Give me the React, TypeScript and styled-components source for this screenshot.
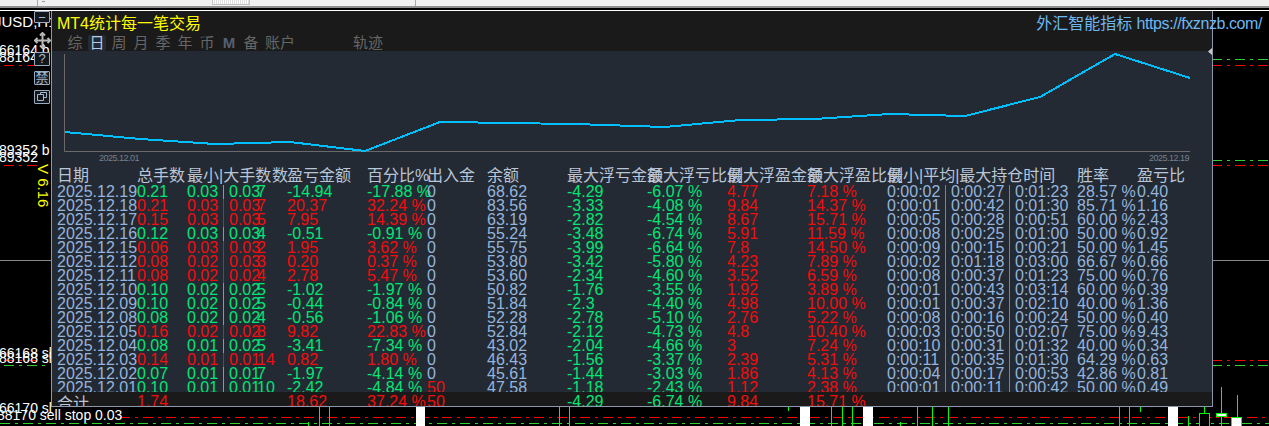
import { createGlobalStyle } from "styled-components";
import styled from "styled-components";

const GlobalStyle = createGlobalStyle`
  html, body {
    margin: 0;
    padding: 0;
    background: #000;
    overflow: hidden;
  }
`;

const columns = "80px 50px 36px 34px 30px 80px 60px 60px 80px 80px 80px 80px 80px 58px 6px 58px 6px 62px 60px 60px";

type Row = string[];

const rows: Row[] = [
  ["2025.12.19", "0.21", "0.03", "0.03", "7", "-14.94", "-17.88 %", "0", "68.62", "-4.29", "-6.07 %", "4.77", "7.18 %", "0:00:02", "0:00:27", "0:01:23", "28.57 %", "0.40"],
  ["2025.12.18", "0.21", "0.03", "0.03", "7", "20.37", "32.24 %", "0", "83.56", "-3.33", "-4.08 %", "9.84", "14.37 %", "0:00:01", "0:00:42", "0:01:30", "85.71 %", "1.16"],
  ["2025.12.17", "0.15", "0.03", "0.03", "5", "7.95", "14.39 %", "0", "63.19", "-2.82", "-4.54 %", "8.67", "15.71 %", "0:00:05", "0:00:28", "0:00:51", "60.00 %", "2.43"],
  ["2025.12.16", "0.12", "0.03", "0.03", "4", "-0.51", "-0.91 %", "0", "55.24", "-3.48", "-6.74 %", "5.91", "11.59 %", "0:00:08", "0:00:25", "0:01:00", "50.00 %", "0.92"],
  ["2025.12.15", "0.06", "0.03", "0.03", "2", "1.95", "3.62 %", "0", "55.75", "-3.99", "-6.64 %", "7.8", "14.50 %", "0:00:09", "0:00:15", "0:00:21", "50.00 %", "1.45"],
  ["2025.12.12", "0.08", "0.02", "0.03", "3", "0.20", "0.37 %", "0", "53.80", "-3.42", "-5.80 %", "4.23", "7.89 %", "0:00:02", "0:01:18", "0:03:00", "66.67 %", "0.66"],
  ["2025.12.11", "0.08", "0.02", "0.02", "4", "2.78", "5.47 %", "0", "53.60", "-2.34", "-4.60 %", "3.52", "6.59 %", "0:00:08", "0:00:37", "0:01:23", "75.00 %", "0.76"],
  ["2025.12.10", "0.10", "0.02", "0.02", "5", "-1.02", "-1.97 %", "0", "50.82", "-1.76", "-3.55 %", "1.92", "3.89 %", "0:00:01", "0:00:43", "0:03:14", "60.00 %", "0.39"],
  ["2025.12.09", "0.10", "0.02", "0.02", "5", "-0.44", "-0.84 %", "0", "51.84", "-2.3", "-4.40 %", "4.98", "10.00 %", "0:00:01", "0:00:37", "0:02:10", "40.00 %", "1.36"],
  ["2025.12.08", "0.08", "0.02", "0.02", "4", "-0.56", "-1.06 %", "0", "52.28", "-2.78", "-5.10 %", "2.76", "5.22 %", "0:00:08", "0:00:16", "0:00:24", "50.00 %", "0.40"],
  ["2025.12.05", "0.16", "0.02", "0.02", "8", "9.82", "22.83 %", "0", "52.84", "-2.12", "-4.73 %", "4.8", "10.40 %", "0:00:03", "0:00:50", "0:02:07", "75.00 %", "9.43"],
  ["2025.12.04", "0.08", "0.01", "0.02", "5", "-3.41", "-7.34 %", "0", "43.02", "-2.04", "-4.66 %", "3", "7.24 %", "0:00:10", "0:00:31", "0:01:32", "40.00 %", "0.34"],
  ["2025.12.03", "0.14", "0.01", "0.01", "14", "0.82", "1.80 %", "0", "46.43", "-1.56", "-3.37 %", "2.39", "5.31 %", "0:00:11", "0:00:35", "0:01:30", "64.29 %", "0.63"],
  ["2025.12.02", "0.07", "0.01", "0.01", "7", "-1.97", "-4.14 %", "0", "45.61", "-1.44", "-3.03 %", "1.86", "4.13 %", "0:00:04", "0:00:17", "0:00:53", "42.86 %", "0.81"],
  ["2025.12.01", "0.10", "0.01", "0.01", "10", "-2.42", "-4.84 %", "50", "47.58", "-1.18", "-2.43 %", "1.12", "2.38 %", "0:00:01", "0:00:11", "0:00:42", "50.00 %", "0.49"],
];

const tabs = ["综", "日", "周", "月", "季", "年", "币", "M", "备"];

const linePoints = "65,132 140,139 215,144 290,142 365,151 440,122 515,123 590,124.5 665,127 740,120 815,119 890,114 965,116 1040,97 1115,54 1190,78";

const Page = styled.div`
  position: relative;
  width: 1269px;
  height: 426px;
  background: #000;
  overflow: hidden;
  font-family: "Liberation Sans", "Noto Sans CJK SC", sans-serif;
`;

const TopStrip = styled.div`
  height: 6px;
  background: #f0f0f0;
  border-bottom: 2px solid #8f8f8f;
  margin-bottom: 2px;
  display: flex;
`;

const StripEdge = styled.div`
  width: 37px;
  border-right: 1px solid #a8a8a8;
`;

const StripBar = styled.div`
  width: 378px;
  border-right: 1px solid #a8a8a8;
  display: flex;
  padding-left: 4px;
  box-sizing: border-box;
`;

const StripGrip = styled.div`
  width: 3px;
  height: 4px;
  margin-top: 1px;
  border-top: 1px solid #999;
  border-bottom: 1px solid #999;
`;

const StripThumb = styled.div`
  width: 38px;
  height: 5px;
  margin-left: 167px;
  box-sizing: border-box;
  border: 1px solid #c4c4c4;
  border-top: none;
  background: repeating-linear-gradient(90deg, #fff 0 1px, #dcdcdc 1px 2px);
`;

const WhiteLine = styled.div`
  height: 1px;
  background: #fff;
`;

const Backdrop = styled.svg`
  position: absolute;
  left: 0;
  top: 0;
`;

const ChartLabel = styled.span<{ $x: number; $y: number; $c?: string }>`
  position: absolute;
  left: ${(p) => p.$x}px;
  top: ${(p) => p.$y}px;
  color: ${(p) => p.$c || "#fff"};
  font-size: 14px;
  line-height: 16px;
  white-space: nowrap;
`;

const SymbolLabel = styled(ChartLabel)`
  font-size: 15px;
`;

const VersionLabel = styled(ChartLabel)`
  writing-mode: vertical-rl;
  font-size: 15px;
`;

const Panel = styled.div`
  position: absolute;
  left: 51px;
  top: 11px;
  width: 1160px;
  height: 395px;
  border: 1px solid #8a98ac;
  border-top: none;
  display: flex;
  flex-direction: column;
  background: #232a33;
`;

const TitleBar = styled.div`
  height: 40px;
  flex: none;
  background: #1a1a1a;
  padding: 0 0 0 5px;
`;

const TitleRow = styled.div`
  height: 21px;
  margin-right: -50px;
  display: flex;
  justify-content: space-between;
  align-items: center;
`;

const Title = styled.div`
  color: #ffff00;
  font-size: 16px;
`;

const SiteLink = styled.div`
  color: #6db8f2;
  font-size: 16px;
  white-space: nowrap;
`;

const SiteUrl = styled.span`
  letter-spacing: -0.42px;
`;

const TabRow = styled.div`
  display: flex;
  align-items: center;
  height: 17px;
  margin-top: 2px;
  padding-left: 9px;
`;

const Tab = styled.div<{ $active?: boolean; $strong?: boolean }>`
  width: 18px;
  height: 16px;
  margin-right: 4px;
  font-size: 15px;
  font-weight: ${(p) => (p.$strong ? 700 : 400)};
  line-height: 16px;
  text-align: center;
  color: ${(p) => (p.$active ? "#b8cbe6" : p.$strong ? "#566070" : "#666")};
  background: ${(p) => (p.$active ? "#232a33" : "transparent")};
  border-radius: 2px;
`;

const WideTab = styled(Tab)`
  width: 32px;
`;

const TrackTab = styled(WideTab)`
  margin-left: 52px;
`;

const ChartArea = styled.div`
  height: 116px;
  flex: none;
  position: relative;
`;

const ChartSvg = styled.svg`
  position: absolute;
  left: 0;
  top: 0;
`;

const AxisDate = styled.span<{ $x: number }>`
  position: absolute;
  left: ${(p) => p.$x}px;
  top: 102px;
  font-size: 9px;
  letter-spacing: -0.5px;
  line-height: 10px;
  color: #76808e;
`;

const TableArea = styled.div`
  flex: 1;
  overflow: hidden;
  padding-left: 5px;
  font-size: 16px;
`;

const Grid = styled.div`
  display: grid;
  grid-template-columns: ${columns};
  grid-template-rows: 18px;
  grid-auto-rows: 14px;
  line-height: 14px;
  white-space: nowrap;
`;

const FooterGrid = styled(Grid)`
  grid-template-rows: 14px;
  padding-top: 3px;
`;

const HeadCell = styled.div`
  color: #b9c6da;
  height: 17px;
  line-height: 17px;
`;

const CountHead = styled(HeadCell)`
  padding-left: 15px;
`;

const Cell = styled.div<{ $tone?: "green" | "red" | "blue" }>`
  color: ${(p) =>
    p.$tone === "green" ? "#00e676" : p.$tone === "red" ? "#f20d0d" : "#95b4dc"};
  height: 14px;
`;

const SplitCell = styled(Cell)`
  position: relative;
  padding-left: 6px;

  &::before {
    content: "";
    position: absolute;
    left: 0;
    top: 0;
    bottom: 0;
    width: 1px;
    background: currentColor;
  }
`;

const Separator = styled.div`
  background: #5f86c8;
  width: 1px;
  height: 14px;
`;

const Footer = styled.div`
  height: 14px;
  flex: none;
  background: #1a1a1a;
  padding-left: 5px;
  font-size: 16px;
  overflow: hidden;
`;

const SideButton = styled.div<{ $y: number; $h?: number }>`
  position: absolute;
  left: 34px;
  top: ${(p) => p.$y}px;
  width: 14px;
  height: ${(p) => p.$h || 12}px;
  border: 1px solid #9aaac0;
  border-radius: 1px;
  background: #14181d;
  color: #a8b8ce;
  font-size: 13px;
  line-height: 12px;
  text-align: center;
`;

const Icon = styled.svg<{ $x: number; $y: number }>`
  position: absolute;
  left: ${(p) => p.$x}px;
  top: ${(p) => p.$y}px;
`;

const Dash = ({ y, x1, x2, c }: { y: number; x1: number; x2: number; c: string }) => (
  <line x1={x1} x2={x2} y1={y + 0.5} y2={y + 0.5} stroke={c} strokeDasharray="10 5 3 5" />
);

const greenBars: [number, number, number][] = [
  [319, 406, 426], [329, 406, 426], [308, 422, 426], [559, 406, 426], [569, 406, 426], [788, 406, 411],
  [831, 406, 426], [842, 406, 426], [852, 406, 426], [900, 422, 426], [917, 406, 426], [932, 406, 426],
  [948, 406, 426], [1119, 406, 426], [1129, 406, 426], [1140, 406, 412], [1188, 416, 426], [1204, 406, 413],
  [1221, 387, 426], [1237, 395, 426],
];

const whiteBars: [number, number][] = [[416, 425], [800, 810], [863, 873], [1168, 1178]];

function rowTone(value: string) {
  return value.startsWith("-") ? "green" : "red";
}

function App() {
  return (
    <Page>
      <GlobalStyle />
      <TopStrip>
        <StripEdge />
        <StripBar>
          <StripGrip />
          <StripThumb />
        </StripBar>
      </TopStrip>
      <WhiteLine />

      <Backdrop width="1269" height="426">
        <line x1="0" x2="52" y1="260.5" y2="260.5" stroke="#8a8a8a" />
        <line x1="1212" x2="1269" y1="260.5" y2="260.5" stroke="#8a8a8a" />
        <Dash y={65} x1={4} x2={35} c="#f00" />
        <Dash y={165} x1={4} x2={38} c="#f00" />
        <Dash y={360} x1={4} x2={40} c="#f00" />
        <Dash y={365} x1={4} x2={46} c="#2fd12f" />
        <Dash y={59} x1={1212} x2={1269} c="#2fd12f" />
        <Dash y={65} x1={1212} x2={1269} c="#f00" />
        <Dash y={160} x1={1212} x2={1269} c="#2fd12f" />
        <Dash y={165} x1={1212} x2={1269} c="#f00" />
        <Dash y={360} x1={1212} x2={1269} c="#f00" />
        <Dash y={365} x1={1212} x2={1269} c="#2fd12f" />
        <Dash y={417} x1={120} x2={1269} c="#f00" />
        <Dash y={423} x1={0} x2={1269} c="#2fd12f" />
        {whiteBars.map(([a, b]) => (
          <rect key={a} x={a} y="406" width={b - a} height="20" fill="#fff" />
        ))}
        {greenBars.map(([x, a, b]) => (
          <line key={x} x1={x + 0.5} x2={x + 0.5} y1={a} y2={b} stroke="#0f0" />
        ))}
        <rect x="1199.5" y="413.5" width="10" height="13" fill="#000" stroke="#0f0" />
        <rect x="1216.5" y="413.5" width="10" height="3" fill="#fff" stroke="#0f0" />
        <rect x="1231.5" y="417.5" width="10" height="9" fill="#fff" stroke="#0f0" />
      </Backdrop>

      <SymbolLabel $x={-6} $y={14}>JUSD,H1</SymbolLabel>
      <ChartLabel $x={-1} $y={42}>66164 b</ChartLabel>
      <ChartLabel $x={-1} $y={49}>88164</ChartLabel>
      <ChartLabel $x={-1} $y={142}>89352 b</ChartLabel>
      <ChartLabel $x={-1} $y={149}>89352</ChartLabel>
      <VersionLabel $x={35} $y={164} $c="#ffff00">V 6.16</VersionLabel>
      <ChartLabel $x={-1} $y={345}>66168 sl</ChartLabel>
      <ChartLabel $x={-1} $y={350}>88168 sl</ChartLabel>
      <ChartLabel $x={-1} $y={400}>66170 sl</ChartLabel>

      <Panel>
        <TitleBar>
          <TitleRow>
            <Title>MT4统计每一笔交易</Title>
            <SiteLink>外汇智能指标 <SiteUrl>https://fxznzb.com/</SiteUrl></SiteLink>
          </TitleRow>
          <TabRow>
            {tabs.map((t) => (
              <Tab key={t} $active={t === "日"} $strong={t === "M"}>{t}</Tab>
            ))}
            <WideTab>账户</WideTab>
            <TrackTab>轨迹</TrackTab>
          </TabRow>
        </TitleBar>

        <ChartArea>
          <ChartSvg width="1160" height="116" viewBox="52 51 1160 116">
            <polyline points="64.5,54 64.5,151.5 1190,151.5" fill="none" stroke="#6a6a6a" />
            <polyline points={linePoints} fill="none" stroke="#00bfff" strokeWidth="2" shapeRendering="crispEdges" />
          </ChartSvg>
          <AxisDate $x={47}>2025.12.01</AxisDate>
          <AxisDate $x={1097}>2025.12.19</AxisDate>
        </ChartArea>

        <TableArea>
          <Grid>
            <HeadCell>日期</HeadCell>
            <HeadCell>总手数</HeadCell>
            <HeadCell>最小|大手数</HeadCell>
            <HeadCell />
            <CountHead>数</CountHead>
            <HeadCell>盈亏金额</HeadCell>
            <HeadCell>百分比%</HeadCell>
            <HeadCell>出入金</HeadCell>
            <HeadCell>余额</HeadCell>
            <HeadCell>最大浮亏金额</HeadCell>
            <HeadCell>最大浮亏比例</HeadCell>
            <HeadCell>最大浮盈金额</HeadCell>
            <HeadCell>最大浮盈比例</HeadCell>
            <HeadCell>最小|平均|最大持仓时间</HeadCell>
            <HeadCell /><HeadCell /><HeadCell /><HeadCell />
            <HeadCell>胜率</HeadCell>
            <HeadCell>盈亏比</HeadCell>
            {rows.map((r) => {
              const tone = rowTone(r[5]);
              const depositTone = r[7] === "0" ? "blue" : "red";
              return [
                <Cell key={r[0] + "date"}>{r[0]}</Cell>,
                <Cell key={r[0] + "lots"} $tone={tone}>{r[1]}</Cell>,
                <Cell key={r[0] + "min"} $tone={tone}>{r[2]}</Cell>,
                <SplitCell key={r[0] + "max"} $tone={tone}>{r[3]}</SplitCell>,
                <Cell key={r[0] + "count"} $tone={tone}>{r[4]}</Cell>,
                <Cell key={r[0] + "pl"} $tone={tone}>{r[5]}</Cell>,
                <Cell key={r[0] + "pct"} $tone={tone}>{r[6]}</Cell>,
                <Cell key={r[0] + "dep"} $tone={depositTone}>{r[7]}</Cell>,
                <Cell key={r[0] + "bal"}>{r[8]}</Cell>,
                <Cell key={r[0] + "fl"} $tone="green">{r[9]}</Cell>,
                <Cell key={r[0] + "flp"} $tone="green">{r[10]}</Cell>,
                <Cell key={r[0] + "fp"} $tone="red">{r[11]}</Cell>,
                <Cell key={r[0] + "fpp"} $tone="red">{r[12]}</Cell>,
                <Cell key={r[0] + "t1"}>{r[13]}</Cell>,
                <Separator key={r[0] + "s1"} />,
                <Cell key={r[0] + "t2"}>{r[14]}</Cell>,
                <Separator key={r[0] + "s2"} />,
                <Cell key={r[0] + "t3"}>{r[15]}</Cell>,
                <Cell key={r[0] + "win"}>{r[16]}</Cell>,
                <Cell key={r[0] + "ratio"}>{r[17]}</Cell>,
              ];
            })}
          </Grid>
        </TableArea>

        <Footer>
          <FooterGrid>
            <HeadCell>合计</HeadCell>
            <Cell $tone="red">1.74</Cell>
            <Cell /><Cell /><Cell />
            <Cell $tone="red">18.62</Cell>
            <Cell $tone="red">37.24 %</Cell>
            <Cell $tone="red">50</Cell>
            <Cell />
            <Cell $tone="green">-4.29</Cell>
            <Cell $tone="green">-6.74 %</Cell>
            <Cell $tone="red">9.84</Cell>
            <Cell $tone="red">15.71 %</Cell>
          </FooterGrid>
        </Footer>
      </Panel>

      <SideButton $y={11} $h={10}>−</SideButton>
      <Icon $x={34} $y={32} width="17" height="17" viewBox="0 0 17 17" fill="none" stroke="#b8b8b8" strokeWidth="2">
        <path d="M8.5 1v15M1 8.5h15" />
        <path d="M6 3.5 8.5 1 11 3.5M6 13.5 8.5 16 11 13.5M3.5 6 1 8.5 3.5 11M13.5 6 16 8.5 13.5 11" />
      </Icon>
      <SideButton $y={52}>?</SideButton>
      <SideButton $y={71}>禁</SideButton>
      <SideButton $y={90}>
        <svg width="14" height="12" viewBox="0 0 14 12" fill="none" stroke="#a8b8ce">
          <path d="M5.5 3.5v-2h6v5h-3M2.5 3.5h6v6h-6z" />
        </svg>
      </SideButton>
      <Icon $x={1208} $y={48} width="5" height="7" viewBox="0 0 5 7">
        <path d="M4 0v7L0 3.5z" fill="#c8c8c8" />
      </Icon>

      <ChartLabel $x={-3} $y={407}>88170 sell stop 0.03</ChartLabel>
    </Page>
  );
}

export default App;
